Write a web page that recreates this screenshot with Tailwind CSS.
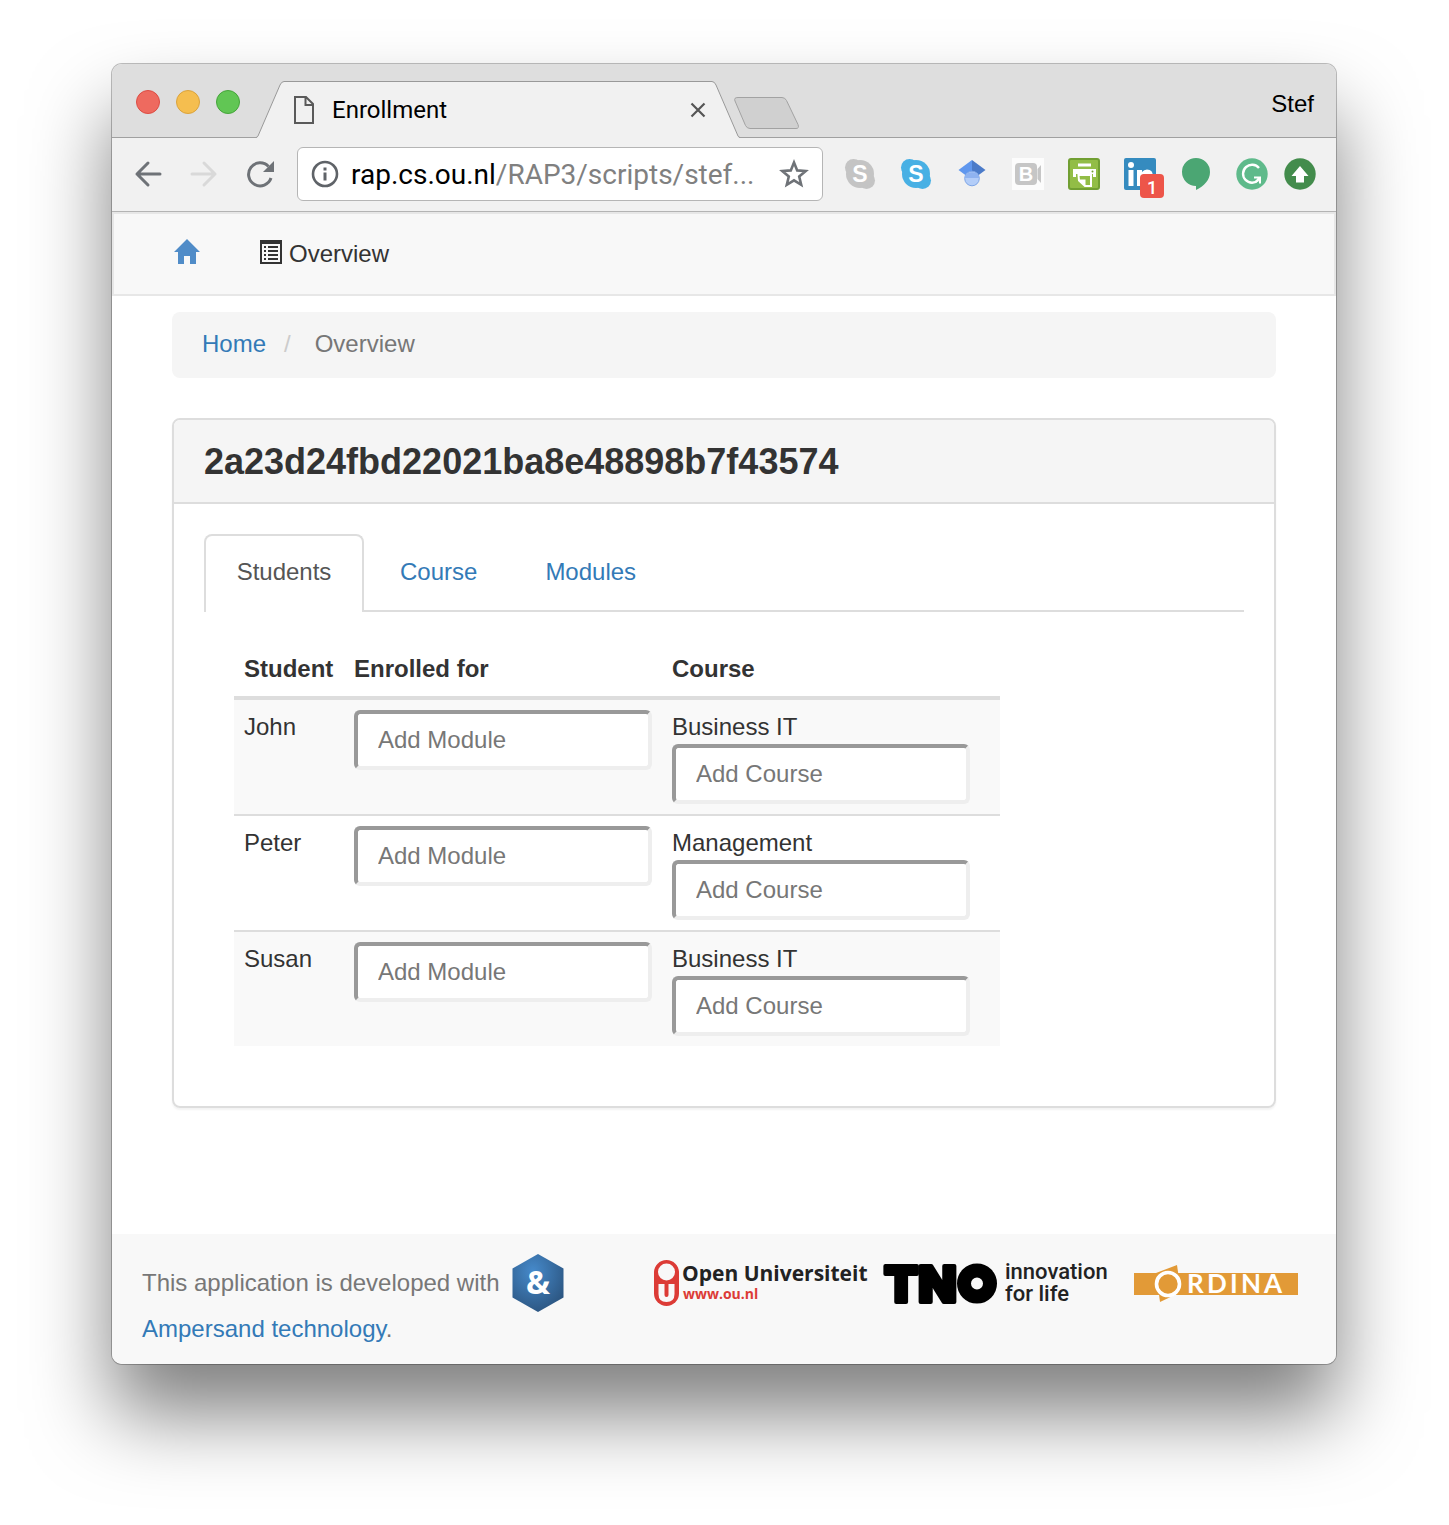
<!DOCTYPE html>
<html lang="en">
<head>
<meta charset="utf-8">
<title>Enrollment</title>
<script src="https://cdn.jsdelivr.net/npm/@tailwindcss/browser@4"></script>
</head>
<body class="min-h-screen overflow-x-hidden bg-white pt-16 pr-[113px] pb-40 pl-28 font-['Liberation_Sans',Arial,sans-serif] text-2xl leading-[34px] text-[#333]">
<div class="overflow-hidden rounded-[10px] bg-white shadow-[0_0_0_1px_rgba(0,0,0,0.25),0_50px_80px_rgba(0,0,0,0.5)]">

  <!-- Tab strip -->
  <header class="flex h-[74px] items-end border-b border-[#a0a0a0] bg-[#dedede]">
    <div class="flex gap-4 self-center pt-0.5 pl-6">
      <button aria-label="Close window" class="size-6 rounded-full border border-[#dd4c43] bg-[#ee6a5f]"></button>
      <button aria-label="Minimize window" class="size-6 rounded-full border border-[#dba33c] bg-[#f5be4f]"></button>
      <button aria-label="Zoom window" class="size-6 rounded-full border border-[#45a53a] bg-[#61c654]"></button>
    </div>
    <div class="relative -mb-px ml-4 flex h-[57px] w-[484px] items-center">
      <svg class="absolute inset-0" width="484" height="57" viewBox="0 0 484 57" aria-hidden="true"><path d="M0 57Q1.500 56.500 2 55L24 4Q25.500 .5 28 .5H456Q458.500 .5 460 4L482 55Q482.500 56.500 484 57Z" fill="#f1f1f1"/><path d="M0 56.500Q1.500 56 2 55L24 4Q25.500 .5 28 .5H456Q458.500 .5 460 4L482 55Q482.500 56 484 56.500" fill="none" stroke="#999"/></svg>
      <svg class="relative ml-[38px]" width="20" height="28" viewBox="0 0 20 28" fill="none" stroke="#5a5a5a" stroke-width="2" aria-hidden="true"><path d="M1 1H12L19 8V27H1ZM11.500 1V9H19"/></svg>
      <span class="relative ml-[18px] flex-1 font-['Roboto',sans-serif] text-black">Enrollment</span>
      <button aria-label="Close tab" class="relative mr-[34px]"><svg width="16" height="16" viewBox="0 0 16 16" stroke="#555" stroke-width="2.200"><path d="M1.500 1.500L14.500 14.500M14.500 1.500L1.500 14.500"/></svg></button>
    </div>
    <button aria-label="New tab" class="-ml-[7px] mb-2"><svg width="68" height="33" viewBox="0 0 68 33"><path d="M5 1.500H49Q52 1.500 53.500 4.500L65 28.500Q66.500 32.500 63 32.500H17Q14 32.500 12.500 29.500L2 5Q.5 1.500 5 1.500Z" fill="#d0d0d0" stroke="#a2a2a2"/></svg></button>
    <span class="mr-[22px] ml-auto self-center pt-1.5 text-black">Stef</span>
  </header>

  <!-- Toolbar -->
  <div class="flex h-[74px] items-center border-b border-[#b4b4b4] bg-[#f1f1f1] pr-5 pb-0.5 pl-[22px]">
    <button aria-label="Back"><svg width="28" height="28" viewBox="0 0 28 28" fill="none" stroke="#6e7277" stroke-width="3" stroke-linecap="round" stroke-linejoin="round"><path d="M26 14H3M14 3L3 14L14 25"/></svg></button>
    <button aria-label="Forward" class="ml-7"><svg width="28" height="28" viewBox="0 0 28 28" fill="none" stroke="#d9d9d9" stroke-width="3" stroke-linecap="round" stroke-linejoin="round"><path d="M2 14H25M14 3L25 14L14 25"/></svg></button>
    <button aria-label="Reload" class="ml-7"><svg width="28" height="28" viewBox="0 0 28 28"><path d="M22.500 6.500A11.500 11.500 0 1 0 25 18" fill="none" stroke="#6e7277" stroke-width="3"/><path d="M28 1V12H17Z" fill="#6e7277"/></svg></button>
    <div class="mr-[21px] ml-[23px] flex h-[54px] flex-1 items-center rounded-md border border-[#b5b5b5] bg-white px-[13px]">
      <button aria-label="Site information"><svg width="28" height="28" viewBox="0 0 28 28"><circle cx="14" cy="14" r="12" fill="none" stroke="#5f6368" stroke-width="2.600"/><path d="M12.500 7.500h3v3h-3zM12.500 12.500h3v8h-3z" fill="#5f6368"/></svg></button>
      <div role="textbox" aria-label="Address" class="ml-3 flex-1 pt-0.5 font-['Roboto',sans-serif] text-[28px] whitespace-nowrap text-black">rap.cs.ou.nl<span class="text-[#808080]">/RAP3/scripts/stef...</span></div>
      <button aria-label="Bookmark this page"><svg width="30" height="30" viewBox="0 0 30 30" fill="none" stroke="#6e7277" stroke-width="2.600"><path d="M15 3.500L18.200 11.400L26.700 12L20.200 17.500L22.200 25.800L15 21.300L7.800 25.800L9.800 17.500L3.300 12L11.800 11.400Z"/></svg></button>
    </div>
    <div class="flex items-center gap-6">
      <button aria-label="Skype, inactive"><svg width="32" height="32" viewBox="0 0 32 32"><g fill="#c4c4c4"><circle cx="9.500" cy="9.500" r="8.500"/><circle cx="22.500" cy="22.500" r="8.500"/><circle cx="16" cy="16" r="14"/></g><text x="16" y="24" text-anchor="middle" class="font-['Liberation_Sans',sans-serif] text-[23px] font-bold" fill="#fff">S</text></svg></button>
      <button aria-label="Skype"><svg width="32" height="32" viewBox="0 0 32 32"><g fill="#48b0e4"><circle cx="9.500" cy="9.500" r="8.500"/><circle cx="22.500" cy="22.500" r="8.500"/><circle cx="16" cy="16" r="14"/></g><text x="16" y="24" text-anchor="middle" class="font-['Liberation_Sans',sans-serif] text-[23px] font-bold" fill="#fff">S</text></svg></button>
      <button aria-label="Scholar"><svg width="32" height="32" viewBox="0 0 32 32"><path d="M16 2L2.500 12L10 17.500H16Z" fill="#6097ee"/><path d="M16 2L29.500 12L22 17.500H16Z" fill="#4b7bc9"/><circle cx="16" cy="20.500" r="7.300" fill="#b3cdf8" stroke="#7da5e6"/><path d="M8.700 20A7.500 7.500 0 0 1 23.300 20Z" fill="#8fb3f0"/></svg></button>
      <button aria-label="Screen recorder"><svg width="32" height="32" viewBox="0 0 32 32"><path fill="#fcfcfc" d="M0 0h32v32H0z"/><rect x="3" y="5" width="22" height="22" rx="4" fill="#c6c6c6"/><path d="M29 7V25L25.500 21V11Z" fill="#c6c6c6"/><text x="14" y="23" text-anchor="middle" class="font-['Liberation_Sans',sans-serif] text-[20px] font-bold" fill="#fff">B</text></svg></button>
      <button aria-label="Print"><svg width="32" height="32" viewBox="0 0 32 32"><rect x="1" y="1" width="30" height="30" rx="2" fill="#92bd46" stroke="#719f32" stroke-width="2"/><path d="M10 5.500h13v3H10zM5 11h23v8h-3v-3H8v3H5z" fill="#fff"/><path d="M10.500 17H23V28H17L11 22.500Z" fill="#92bd46" stroke="#fff" stroke-width="2"/><path d="M10.500 21.500h7v6.500z" fill="#fff"/><circle cx="24.500" cy="13.500" r="1" fill="#719f32"/></svg></button>
      <button aria-label="LinkedIn, 1 notification" class="relative"><svg width="32" height="32" viewBox="0 0 32 32"><rect width="32" height="32" rx="2" fill="#358bbf"/><circle cx="7" cy="7" r="3" fill="#fff"/><path d="M4.500 12h5v16h-5zM13 12h5v2q2-2.500 5-2.500 6 0 6 7V28h-5V20q0-4-3-4t-3 4v8h-5z" fill="#fff"/></svg><span class="absolute top-4 left-4 size-6 rounded bg-[#ed5549] text-center font-['Roboto',sans-serif] text-lg leading-[27px] font-medium text-white">1</span></button>
      <button aria-label="Hangouts"><svg width="32" height="32" viewBox="0 0 32 32"><path d="M16 0A14 14 0 0 1 30 14C30 22 24 28 16 32V28A14 14 0 0 1 16 0Z" fill="#4ba673"/></svg></button>
      <button aria-label="Grammarly"><svg width="32" height="32" viewBox="0 0 32 32"><circle cx="16" cy="16" r="15.700" fill="#5fba8b"/><path d="M23 10A9 9 0 1 0 22.500 22" fill="none" stroke="#fff" stroke-width="2.400"/><path d="M18 19.500H24V25.500M23.500 20L19.500 24" fill="none" stroke="#fff" stroke-width="2"/></svg></button>
      <button aria-label="Update available" class="-ml-2"><svg width="32" height="32" viewBox="0 0 32 32"><circle cx="16" cy="16" r="15.700" fill="#438c4c"/><path d="M16 8L24.500 18H20V24.500H12V18H7.500Z" fill="#fff"/></svg></button>
    </div>
  </div>

  <!-- Navigation bar -->
  <nav class="flex h-[84px] items-center border-2 border-[#e7e7e7] bg-[#f8f8f8] pl-[60px]">
    <a href="#" aria-label="Home" class="pb-1"><svg width="26" height="26" viewBox="0 0 26 26"><path d="M13 0L26 13H22V25H16V17H10V25H4V13H0Z" fill="#508cc8"/></svg></a>
    <a href="#" class="ml-[60px] flex items-center gap-[7px]"><svg class="mb-1" width="22" height="24" viewBox="0 0 22 24" aria-hidden="true"><path d="M0 0H22V24H0ZM2 4V22H20V4Z" fill="#333" fill-rule="evenodd"/><path d="M4 6h2v2H4zM4 10h2v2H4zM4 14h2v2H4zM4 18h2v2H4zM8 6h10v2H8zM8 10h10v2H8zM8 14h10v2H8zM8 18h10v2H8z" fill="#333"/></svg>Overview</a>
  </nav>

  <main class="px-[60px] pt-4 pb-[126px]">
    <nav aria-label="Breadcrumb" class="flex rounded-lg bg-[#f5f5f5] px-[30px] pt-[15px] pb-[17px]">
      <a href="#" class="text-[#337ab7]">Home</a><span class="ml-[18px] text-[#ccc]">/</span><span class="ml-6 text-[#777]">Overview</span>
    </nav>

    <section class="mt-10 rounded-lg border-2 border-[#ddd] shadow-[0_2px_2px_rgba(0,0,0,0.05)]">
      <h1 class="rounded-t-md border-b-2 border-[#ddd] bg-[#f5f5f5] px-[30px] pt-[22px] pb-5 text-4xl leading-[40px] font-bold">2a23d24fbd22021ba8e48898b7f43574</h1>
      <div class="px-[30px] pt-[30px] pb-[60px]">
        <div role="tablist" class="flex h-[78px] border-b-2 border-[#ddd]">
          <button role="tab" aria-selected="true" class="-mb-0.5 w-40 rounded-t-lg border-2 border-b-0 border-[#ddd] bg-white pb-[5px] text-[#555]">Students</button>
          <button role="tab" aria-selected="false" class="ml-9 text-[#337ab7]">Course</button>
          <button role="tab" aria-selected="false" class="ml-[68px] text-[#337ab7]">Modules</button>
        </div>
        <table class="mt-[30px] ml-[30px] w-[766px] table-fixed border-separate border-spacing-0 text-left">
          <colgroup><col class="w-[110px]"><col class="w-[318px]"><col></colgroup>
          <thead><tr>
            <th class="border-b-4 border-[#ddd] p-2.5">Student</th><th class="border-b-4 border-[#ddd] p-2.5">Enrolled for</th><th class="border-b-4 border-[#ddd] p-2.5">Course</th>
          </tr></thead>
          <tbody class="align-top">
            <tr class="bg-[#f9f9f9]">
              <td class="p-2.5">John</td>
              <td class="p-2.5"><input aria-label="Add module for John" placeholder="Add Module" class="block h-[60px] w-full rounded-md border-4 border-t-[#999] border-r-[#eee] border-b-[#eee] border-l-[#999] bg-white px-5 placeholder:text-[#777]"></td>
              <td class="p-2.5">Business IT<input aria-label="Add course for John" placeholder="Add Course" class="block h-[60px] w-[298px] rounded-md border-4 border-t-[#999] border-r-[#eee] border-b-[#eee] border-l-[#999] bg-white px-5 placeholder:text-[#777]"></td>
            </tr>
            <tr>
              <td class="border-t-2 border-[#ddd] p-2.5">Peter</td>
              <td class="border-t-2 border-[#ddd] p-2.5"><input aria-label="Add module for Peter" placeholder="Add Module" class="block h-[60px] w-full rounded-md border-4 border-t-[#999] border-r-[#eee] border-b-[#eee] border-l-[#999] bg-white px-5 placeholder:text-[#777]"></td>
              <td class="border-t-2 border-[#ddd] p-2.5">Management<input aria-label="Add course for Peter" placeholder="Add Course" class="block h-[60px] w-[298px] rounded-md border-4 border-t-[#999] border-r-[#eee] border-b-[#eee] border-l-[#999] bg-white px-5 placeholder:text-[#777]"></td>
            </tr>
            <tr class="bg-[#f9f9f9]">
              <td class="border-t-2 border-[#ddd] p-2.5">Susan</td>
              <td class="border-t-2 border-[#ddd] p-2.5"><input aria-label="Add module for Susan" placeholder="Add Module" class="block h-[60px] w-full rounded-md border-4 border-t-[#999] border-r-[#eee] border-b-[#eee] border-l-[#999] bg-white px-5 placeholder:text-[#777]"></td>
              <td class="border-t-2 border-[#ddd] p-2.5">Business IT<input aria-label="Add course for Susan" placeholder="Add Course" class="block h-[60px] w-[298px] rounded-md border-4 border-t-[#999] border-r-[#eee] border-b-[#eee] border-l-[#999] bg-white px-5 placeholder:text-[#777]"></td>
            </tr>
          </tbody>
        </table>
      </div>
    </section>
  </main>

  <footer class="flex items-start justify-between bg-[#f8f8f8] pt-5 pr-[38px] pb-[18px] pl-[30px] text-[#777]">
    <div>
      <div class="flex h-[58px] items-center gap-3">This application is developed with
        <svg width="52" height="58" viewBox="0 0 52 58" role="img" aria-label="Ampersand"><defs><radialGradient id="hex" cx=".4" cy=".3" r=".75"><stop offset="0" stop-color="#468acb"/><stop offset="1" stop-color="#2b547f"/></radialGradient></defs><path d="M26 0L51.500 14.500V43.500L26 58L.5 43.500V14.500Z" fill="url(#hex)"/><text x="26" y="40" text-anchor="middle" class="font-['Open_Sans',sans-serif] text-[32px] font-bold" fill="#fff">&amp;</text></svg>
      </div>
      <p><a href="#" class="text-[#337ab7]">Ampersand technology</a>.</p>
    </div>
    <div class="flex h-[58px] items-center">
      <a href="#" aria-label="Open Universiteit"><svg width="212" height="48" viewBox="0 0 212 48" class="overflow-visible"><rect x="0" y="1" width="25" height="46" rx="12.500" fill="#dc3b36"/><circle cx="12.500" cy="13" r="8.500" fill="#f8f8f8"/><path d="M4.500 25H10.500V36Q10.500 38 12.500 38T14.500 36V25H20.500V35Q20.500 43 12.500 43T4.500 35Z" fill="#f8f8f8"/><text x="28" y="22" class="font-['Open_Sans',sans-serif] text-[21px] font-bold" fill="#222">Open Universiteit</text><text x="29" y="40" class="font-['Open_Sans',sans-serif] text-[14px] font-bold" fill="#dc3b36">www.ou.nl</text></svg></a>
      <a href="#" aria-label="TNO innovation for life" class="ml-[18px] flex items-center gap-2">
        <svg width="113" height="48" viewBox="0 0 113 48" class="overflow-visible"><text x="0" y="43" class="font-['Inter',sans-serif] text-[50px] font-black" fill="#000" stroke="#000" stroke-width="4" stroke-linejoin="round">TN</text><circle cx="93" cy="24.500" r="13" fill="none" stroke="#000" stroke-width="14"/></svg>
        <span class="w-[113px] font-['Roboto',sans-serif] text-[22px] leading-[22px] font-medium text-[#222]">innovation<br>for life</span>
      </a>
      <a href="#" aria-label="Ordina" class="ml-4"><svg width="164" height="48" viewBox="0 0 164 48"><path d="M0 14H164V36H0Z" fill="#e29a37"/><path d="M22 14L43 6L47 33L26 43Z" fill="#e29a37"/><circle cx="34" cy="25" r="11.500" fill="#e29a37" stroke="#fff" stroke-width="3.600"/><g class="font-['Lato',sans-serif] text-[26px] font-bold" fill="#fff"><text x="53" y="34">R</text><text x="73" y="34">D</text><text x="96" y="34">I</text><text x="107" y="34">N</text><text x="130" y="34">A</text></g></svg></a>
    </div>
  </footer>
</div>
</body>
</html>
